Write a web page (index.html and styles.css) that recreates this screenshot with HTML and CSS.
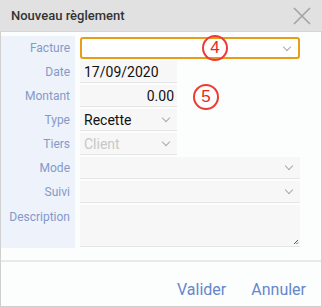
FILE: index.html
```html
<!DOCTYPE html>
<html lang="fr">

<head>
  <meta charset="UTF-8">
  <meta name="viewport" content="width=device-width, initial-scale=1.0">
  <title>Nouveau règlement</title>
  <link rel="stylesheet" href="styles.css">
</head>

<body>
  <div class="dialog">
    <div class="dialog-header">
      <span class="dialog-title">Nouveau règlement</span>
      <svg class="close-icon" width="18" height="18" viewBox="0 0 18 18">
        <path d="M1 1 L17 17 M17 1 L1 17" stroke="#a3a3a3" stroke-width="1.6" fill="none" />
      </svg>
    </div>

    <div class="dialog-body">
      <div class="row">
        <label class="row-label">Facture</label>
        <div class="field field-select field-wide field-focus">
          <span class="value"></span>
          <span class="chevron"></span>
        </div>
      </div>
      <div class="row">
        <label class="row-label">Date</label>
        <div class="field field-short"><span class="value">17/09/2020</span></div>
      </div>
      <div class="row">
        <label class="row-label">Montant</label>
        <div class="field field-short field-number"><span class="value">0.00</span></div>
      </div>
      <div class="row">
        <label class="row-label">Type</label>
        <div class="field field-select field-short">
          <span class="value">Recette</span>
          <span class="chevron"></span>
        </div>
      </div>
      <div class="row">
        <label class="row-label">Tiers</label>
        <div class="field field-select field-short">
          <span class="value value-disabled">Client</span>
          <span class="chevron"></span>
        </div>
      </div>
      <div class="row">
        <label class="row-label">Mode</label>
        <div class="field field-select field-wide">
          <span class="value"></span>
          <span class="chevron"></span>
        </div>
      </div>
      <div class="row">
        <label class="row-label">Suivi</label>
        <div class="field field-select field-wide">
          <span class="value"></span>
          <span class="chevron"></span>
        </div>
      </div>
      <div class="row row-tall">
        <label class="row-label label-top">Description</label>
        <div class="field field-wide field-area">
          <svg class="resize-grip" width="6" height="6" viewBox="0 0 6 6">
            <path d="M5 1 L1 5 M5 3.5 L3.5 5" stroke="#555" stroke-width="1" fill="none" />
          </svg>
        </div>
      </div>
    </div>

    <div class="dialog-footer">
      <button class="link-btn">Valider</button>
      <button class="link-btn">Annuler</button>
    </div>

    <span class="marker marker-4">4</span>
    <span class="marker marker-5">5</span>
  </div>
</body>

</html>
```

FILE: styles.css
```css
body {
  margin: 0;
  font-family: Roboto, "Liberation Sans", sans-serif;
  background-color: #fff;
}

.dialog {
  position: relative;
  width: 322px;
  height: 307px;
  box-sizing: border-box;
  border: 1px solid #d0d0d0;
  border-top: none;
  background-color: #fcfdfd;
  display: flex;
  flex-direction: column;
}

.dialog-header {
  height: 31px;
  margin: 0 -1px;
  padding: 0 11px 0 11px;
  display: flex;
  align-items: center;
  justify-content: space-between;
  background-color: #e1e1e1;
  border-bottom: 1px solid #f2cfa5;
}

.dialog-title {
  font-size: 13px;
  font-weight: 500;
  color: #333;
}

.dialog-body {
  margin-top: 4px;
  display: flex;
  flex-direction: column;
}

.row {
  display: grid;
  grid-template-columns: 74px 1fr;
  column-gap: 5px;
  height: 24px;
  align-items: center;
}

.row-tall {
  height: 44px;
  align-items: start;
}

.row-label {
  height: 100%;
  box-sizing: border-box;
  padding-right: 5px;
  display: flex;
  align-items: center;
  justify-content: flex-end;
  background-color: #eef2fb;
  color: #8499c9;
  font-size: 12px;
}

.label-top {
  align-items: flex-start;
  padding-top: 6px;
}

.field {
  position: relative;
  height: 22px;
  box-sizing: border-box;
  padding: 0 4px;
  display: flex;
  align-items: center;
  justify-content: space-between;
  background-color: #f7f7f7;
  border-bottom: 1px solid #e6e6e6;
  font-size: 14px;
  color: #111;
}

.field-short {
  width: 97px;
}

.field-wide {
  width: 220px;
}

.field-focus {
  background-color: #fff;
  border: 2px solid #e89d16;
  border-radius: 3px;
}

.field-number {
  justify-content: flex-end;
  padding-right: 3px;
}

.field-area {
  height: 42px;
  margin-top: 1px;
}

.value-disabled {
  color: #c8c8c8;
}

.chevron {
  width: 5px;
  height: 5px;
  margin: 0 4px 3px 0;
  border-right: 1px solid #aaa;
  border-bottom: 1px solid #aaa;
  transform: rotate(45deg);
}

.resize-grip {
  position: absolute;
  right: 1px;
  bottom: 1px;
}

.dialog-footer {
  margin-top: auto;
  height: 46px;
  box-sizing: border-box;
  border-top: 2px solid #e9e9e9;
  display: flex;
  justify-content: flex-end;
  align-items: flex-end;
  gap: 25px;
  padding: 0 15px 7px 0;
}

.link-btn {
  border: none;
  background: none;
  padding: 0;
  font-family: Roboto, "Liberation Sans", sans-serif;
  font-size: 16px;
  color: #6686cc;
  cursor: pointer;
}

.marker {
  position: absolute;
  width: 22px;
  height: 22px;
  border: 2px solid #ee3a34;
  border-radius: 50%;
  display: flex;
  align-items: center;
  justify-content: center;
  color: #e8281f;
  font-size: 17px;
  font-family: "Liberation Sans", sans-serif;
  background-color: transparent;
}

.marker-4 {
  left: 201px;
  top: 35px;
}

.marker-5 {
  left: 192px;
  top: 84px;
}
```
